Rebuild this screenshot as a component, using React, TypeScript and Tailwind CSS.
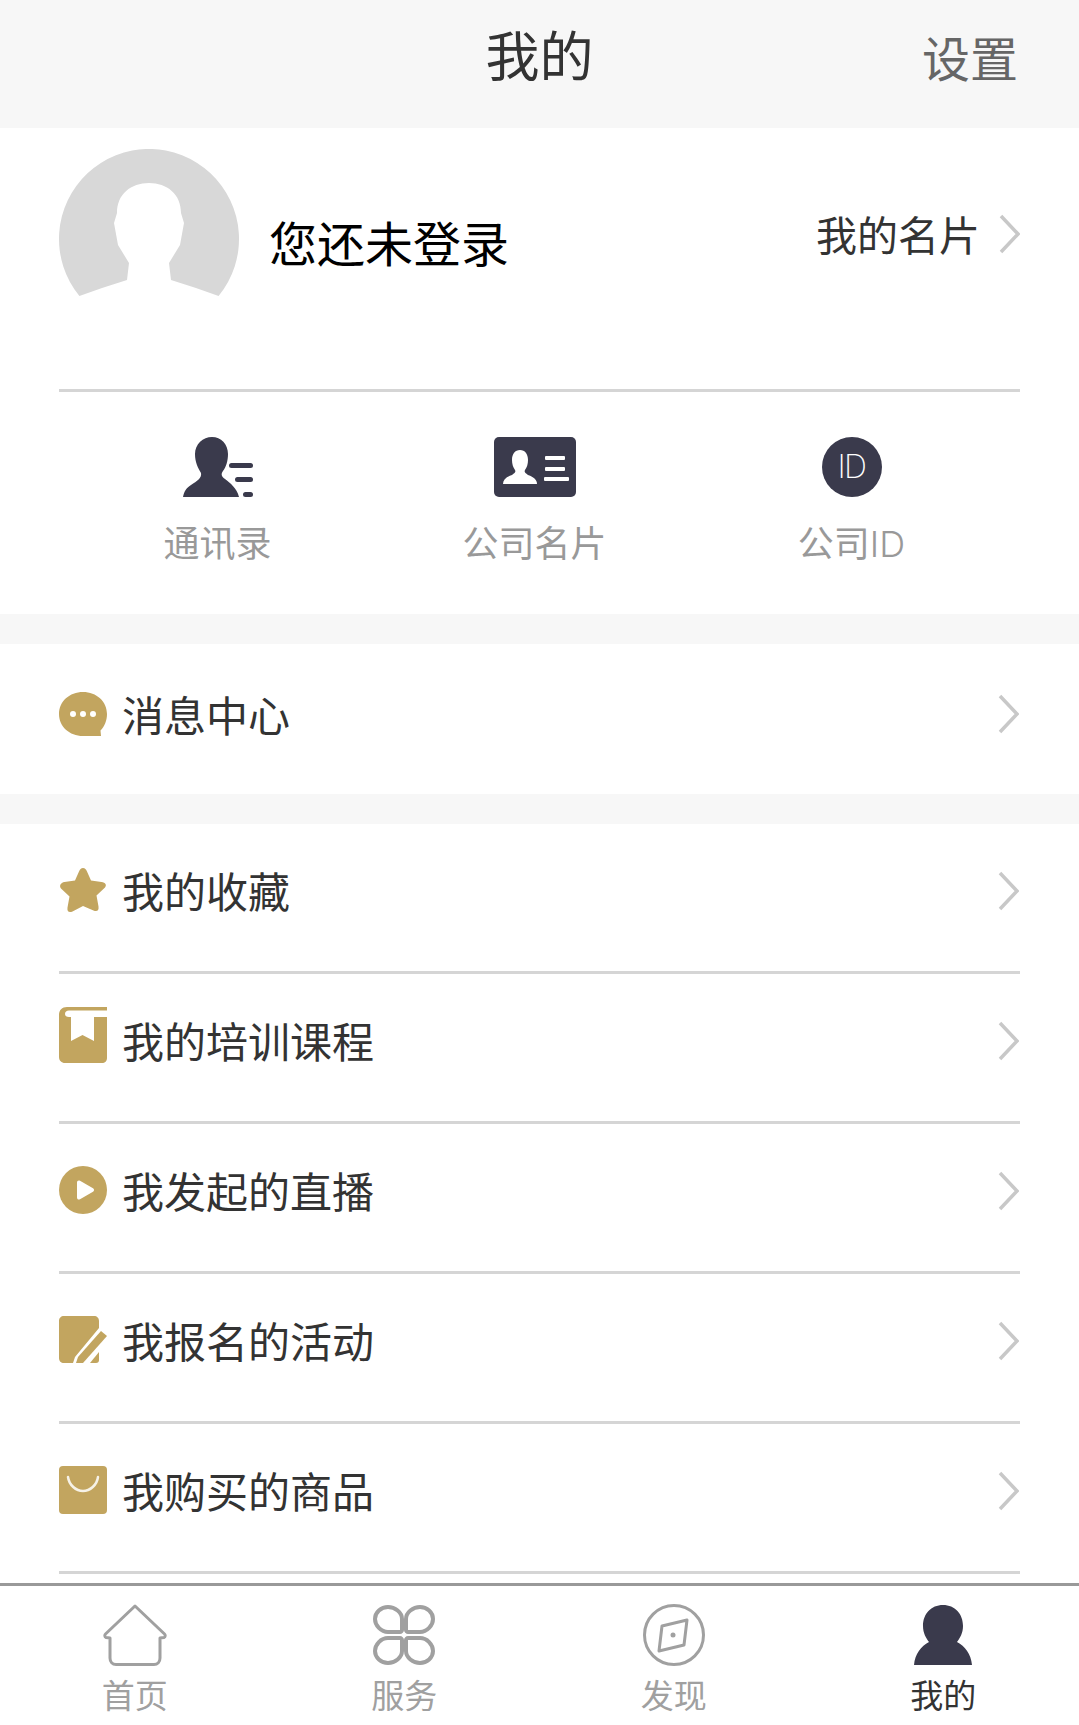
const GOLD = '#c2a55f';
const DARK = '#3a3a4c';

function Chevron() {
  return (
    <svg width="21" height="40" viewBox="0 0 21 40" fill="none" stroke="#c8c8c8" strokeWidth="3.500" className="shrink-0">
      <path d="M2 2l17 18L2 38" />
    </svg>
  );
}

function ChatIcon() {
  return (
    <svg width="48" height="48" viewBox="0 0 48 48" className="mt-[2px]">
      <path d="M24 1C10.500 1 0 10.500 0 23s10.500 22 24 22h18l-.5-5.500C45.500 35.500 48 29.500 48 23 48 10.500 37.500 1 24 1z" fill={GOLD} />
      <circle cx="14" cy="23" r="3" fill="#fff" />
      <circle cx="24" cy="23" r="3" fill="#fff" />
      <circle cx="34" cy="23" r="3" fill="#fff" />
    </svg>
  );
}

function StarIcon() {
  return (
    <svg width="48" height="48" viewBox="0 0 48 48">
      <path d="M24 2c2 0 3 1.500 4 3.500l4 9 10.500 1.500c4 .6 5.500 3 3.500 5.500l-8.500 8 2 11c.6 4-1.500 5.500-5 4L24 40l-10.500 5.500c-3.500 1.500-5.600 0-5-4l2-11-8.500-8C0 20 1.500 16.600 5.500 16L16 14.500l4-9C21 3.500 22 2 24 2z" fill={GOLD} />
    </svg>
  );
}

function BookIcon() {
  return (
    <svg width="48" height="56" viewBox="0 0 48 56" className="-mt-[10px]">
      <path d="M8 0h40v3.500H10C7.500 3.500 6 5 6 7s1.500 3 4 3h2v24l11.500-6 11.500 6V10h13v41c0 3-2 5-5 5H6c-3.500 0-6-2.500-6-6V8c0-5 3-8 8-8z" fill={GOLD} />
    </svg>
  );
}

function PlayIcon() {
  return (
    <svg width="48" height="48" viewBox="0 0 48 48">
      <circle cx="24" cy="24" r="24" fill={GOLD} />
      <path d="M18 16.500c0-1.800 1.500-2.500 3-1.700l13 7.500c1.400.8 1.400 2.600 0 3.400l-13 7.500c-1.500.8-3 .1-3-1.700z" fill="#fff" />
    </svg>
  );
}

function EditIcon() {
  return (
    <svg width="48" height="48" viewBox="0 0 48 48">
      <path d="M5 0h30c3 0 5 2 5 5v7L16 41l-2 6H5c-3 0-5-2-5-5V5c0-3 2-5 5-5z" fill={GOLD} />
      <path d="M42 15l6 5-24 27h-7l2-6z" fill={GOLD} />
      <path d="M40 36v8c0 2-1 3-3 3h-6z" fill={GOLD} />
    </svg>
  );
}

function BagIcon() {
  return (
    <svg width="48" height="48" viewBox="0 0 48 48">
      <rect width="48" height="48" rx="4" fill={GOLD} />
      <path d="M9 11c1 8 8 14 15 14s14-6 15-14" fill="none" stroke="#fff" strokeOpacity="0.85" strokeWidth="2.500" strokeLinecap="round" />
    </svg>
  );
}

function ContactIcon() {
  return (
    <svg width="70" height="60" viewBox="0 0 70 60">
      <path d="M29 0c9 0 16 7 16 17 0 7-2 13-5 17-2 3-2 5 2 8 5 4 12 9 14 18H0c1-5 3-9 8-12 6-4 11-7 10-12-3-5-6-11-6-19C12 7 20 0 29 0z" fill={DARK} />
      <rect x="46" y="26" width="24" height="5" rx="2.500" fill={DARK} />
      <rect x="52" y="40" width="18" height="5" rx="2.500" fill={DARK} />
      <rect x="60" y="55" width="10" height="5" rx="2.500" fill={DARK} />
    </svg>
  );
}

function CardIcon() {
  return (
    <svg width="82" height="60" viewBox="0 0 82 60">
      <rect width="82" height="60" rx="5" fill={DARK} />
      <path d="M26 13c5 0 8 4 8 10 0 4-1 7-3 10-1 2 0 3 3 5 6 2 9 5 9 9H9c0-4 3-7 9-9 3-2 4-3 3-5-2-3-3-6-3-10 0-6 3-10 8-10z" fill="#fff" />
      <rect x="51" y="19" width="20" height="4" rx="1" fill="#fff" />
      <rect x="51" y="30" width="20" height="4" rx="1" fill="#fff" />
      <rect x="50" y="40" width="25" height="4" rx="1" fill="#fff" />
    </svg>
  );
}

function HomeIcon() {
  return (
    <svg width="64" height="62" viewBox="0 0 64 62" fill="none" stroke="#a0a0a0" strokeWidth="3" strokeLinejoin="round">
      <path d="M32 2L2.500 30c-1 1-1 3 .5 3.500L7 34v20c0 4 2.500 6.500 6 6.500h38c3.500 0 6-2.500 6-6.500V34l4-.5c1.500-.5 1.500-2.500.5-3.500z" />
    </svg>
  );
}

function ServiceIcon() {
  return (
    <svg width="62" height="60" viewBox="0 0 62 60" fill="none" stroke="#a0a0a0" strokeWidth="4">
      <path d="M15 2C8 2 2 7.500 2 14s6 13 13 13h12c1 0 2-1 2-2V14C29 7.500 22 2 15 2z" />
      <path d="M47 2c7 0 13 5.500 13 12s-6 13-13 13H35c-1 0-2-1-2-2V14C33 7.500 40 2 47 2z" />
      <path d="M15 58C8 58 2 52.500 2 46s6-13 13-13h12c1 0 2 1 2 2v11c0 6.500-7 12-14 12z" />
      <path d="M47 58c7 0 13-5.500 13-12s-6-13-13-13H35c-1 0-2 1-2 2v11c0 6.500 7 12 14 12z" />
    </svg>
  );
}

function CompassIcon() {
  return (
    <svg width="62" height="62" viewBox="0 0 62 62" fill="none" stroke="#a0a0a0">
      <circle cx="31" cy="31" r="29.500" strokeWidth="3" />
      <path d="M19 22l25-6-3 25-25 6z" strokeWidth="3" strokeLinejoin="round" />
      <circle cx="30" cy="31" r="2.500" fill="#a0a0a0" stroke="none" />
    </svg>
  );
}

function PersonIcon() {
  return (
    <svg width="58" height="60" viewBox="0 0 58 60">
      <path d="M29 0c12 0 20 9 20 21 0 7-3 12-6 16 8 4 14 12 15 23H0c1-11 7-19 15-23-3-4-6-9-6-16C9 9 17 0 29 0z" fill={DARK} />
    </svg>
  );
}

const grupoLista = [
  { label: '我的收藏', icon: StarIcon },
  { label: '我的培训课程', icon: BookIcon },
  { label: '我发起的直播', icon: PlayIcon },
  { label: '我报名的活动', icon: EditIcon },
  { label: '我购买的商品', icon: BagIcon },
];

const atalhos = [
  { label: '通讯录', icon: ContactIcon },
  { label: '公司名片', icon: CardIcon },
];

const abas = [
  { label: '首页', icon: HomeIcon },
  { label: '服务', icon: ServiceIcon },
  { label: '发现', icon: CompassIcon },
  { label: '我的', icon: PersonIcon, active: true },
];

export default function App() {
  return (
    <div className="w-[1079px] h-[1725px] bg-white flex flex-col overflow-hidden font-['Noto_Sans_CJK_SC','Noto_Sans',sans-serif]">
      {/* Cabecalho */}
      <header className="h-[128px] shrink-0 bg-[#f7f7f7] relative flex items-center justify-center">
        <h1 className="text-[54px] leading-none text-[#333] -mt-[20px]">我的</h1>
        <span className="absolute right-[61px] top-[32px] text-[48px] leading-none text-[#666]">设置</span>
      </header>

      {/* Perfil */}
      <section className="mx-[59px] h-[264px] shrink-0 border-b-[3px] border-[#d5d5d5] flex items-start pt-[21px]">
        <svg width="180" height="150" viewBox="0 0 180 150" className="shrink-0">
          <path d="M20.400 147A90 90 0 1 1 159.600 147Q135 138 112 131L110 114 121 96 125 74 122 64C122 45 108 34 90 34S58 45 58 64L55 74 59 96 70 114 68 131Q45 138 20.400 147z" fill="#d8d8d8" />
        </svg>
        <span className="ml-[30px] mt-[68px] text-[48px] leading-none text-black">您还未登录</span>
        <div className="ml-auto mt-[64px] flex items-center gap-[19px] mr-[0px]">
          <span className="text-[41px] leading-none text-[#333]">我的名片</span>
          <Chevron />
        </div>
      </section>

      {/* Atalhos */}
      <section className="h-[222px] shrink-0 grid grid-cols-[317px_317px_317px] pl-[59px] pt-[45px]">
        {atalhos.map(({ label, icon: Icon }) => (
          <div key={label} className="flex flex-col items-center">
            <div className="h-[60px]"><Icon /></div>
            <span className="mt-[22px] text-[36px] leading-[44px] text-[#999]">{label}</span>
          </div>
        ))}
        <div className="flex flex-col items-center">
          <div className="w-[60px] h-[60px] rounded-full bg-[#3a3a4c] flex items-center justify-center text-white text-[32px] tracking-tighter font-['Inter'] font-extralight">ID</div>
          <span className="mt-[22px] text-[36px] leading-[44px] text-[#999]">公司<span className="font-['Inter'] font-light">ID</span></span>
        </div>
      </section>

      <div className="h-[30px] shrink-0 bg-[#f7f7f7]" />

      {/* Mensagens */}
      <a className="h-[150px] shrink-0 px-[59px] pb-[10px] flex items-center">
        <ChatIcon />
        <span className="ml-[15px] text-[42px] leading-none text-[#333]">消息中心</span>
        <span className="ml-auto mr-[1px]"><Chevron /></span>
      </a>

      <div className="h-[30px] shrink-0 bg-[#f7f7f7]" />

      {/* Lista */}
      <div className="flex-1 min-h-0 px-[59px]">
        {grupoLista.map(({ label, icon: Icon }) => (
          <a key={label} className="h-[150px] pb-[15px] border-b-[3px] border-[#d5d5d5] flex items-center">
            <div className="w-[48px] flex justify-center"><Icon /></div>
            <span className="ml-[15px] text-[42px] leading-none text-[#333]">{label}</span>
            <span className="ml-auto mr-[1px] mt-[2px]"><Chevron /></span>
          </a>
        ))}
      </div>

      {/* Abas */}
      <nav className="h-[142px] shrink-0 border-t-[3px] border-[#999] grid grid-cols-4 pt-[18px] pr-[1px]">
        {abas.map(({ label, icon: Icon, active }) => (
          <div key={label} className="flex flex-col items-center">
            <div className="h-[62px] flex items-center"><Icon /></div>
            <span className={`mt-[6px] text-[33px] leading-[44px] ${active ? 'text-[#333]' : 'text-[#a0a0a0]'}`}>{label}</span>
          </div>
        ))}
      </nav>
    </div>
  );
}
